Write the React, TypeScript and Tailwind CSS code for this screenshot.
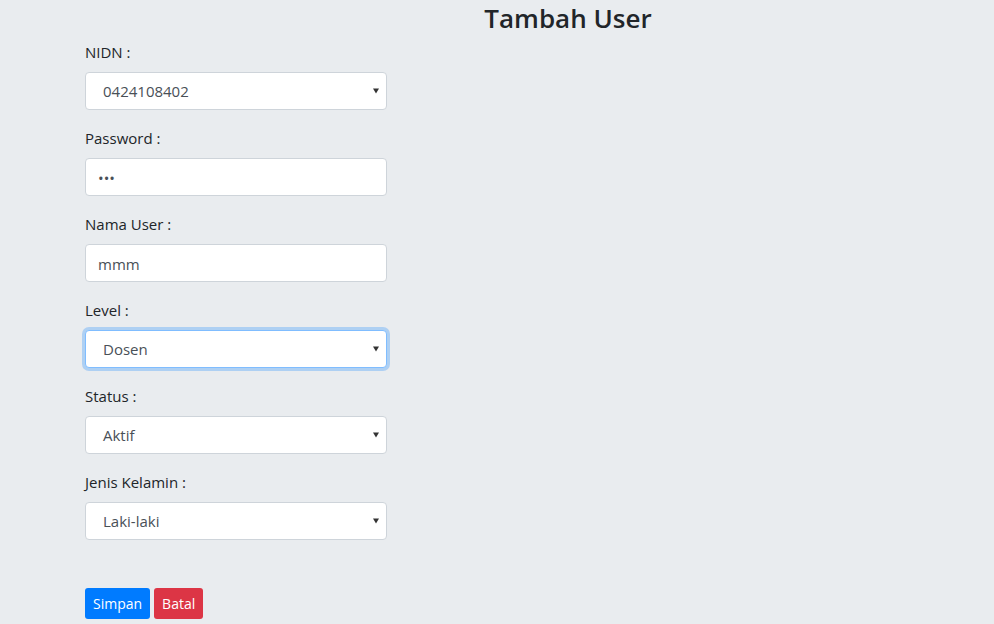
import React from 'react';

const font = { fontFamily: '"Open Sans", "Liberation Sans", sans-serif' };

function Caret() {
  return (
    <svg width="8" height="6" viewBox="0 0 8 6" className="shrink-0">
      <path d="M1 0.5h6L4 5.5z" fill="#333" />
    </svg>
  );
}

function Select({ value, focus }: { value: string; focus?: boolean }) {
  return (
    <div
      className={`h-[38px] w-full bg-white rounded-[4px] border flex items-center justify-between pl-[17px] pr-[6px] text-[15px] text-[#495057] ${
        focus ? 'border-[#80bdff] shadow-[0_0_0_3px_rgba(0,123,255,0.25)]' : 'border-[#ced4da]'
      }`}
    >
      <span className="pt-[1px]">{value}</span>
      <Caret />
    </div>
  );
}

function Field({ label, children }: { label: string; children: React.ReactNode }) {
  return (
    <div className="mb-4">
      <label className="block mb-2 text-[15px] leading-6 text-[#212529]">{label}</label>
      {children}
    </div>
  );
}

export default function App() {
  return (
    <div className="min-h-screen bg-[#e9ecef] text-[#212529]" style={font}>
      <h3 className="text-[26px] leading-[36px] font-semibold text-center pl-[142px] mb-[4px]">Tambah User</h3>
      <div className="pl-[85px]">
        <div className="w-[302px]">
          <Field label="NIDN :">
            <Select value="0424108402" />
          </Field>
          <Field label="Password :">
            <input
              type="password"
              readOnly
              value="123"
              className="h-[38px] w-full bg-white rounded-[4px] border border-[#ced4da] px-3 pt-[1px] text-[15px] text-[#495057] outline-none"
            />
          </Field>
          <Field label="Nama User :">
            <input
              type="text"
              readOnly
              value="mmm"
              className="h-[38px] w-full bg-white rounded-[4px] border border-[#ced4da] px-3 pt-[1px] text-[15px] text-[#495057] outline-none"
            />
          </Field>
          <Field label="Level :">
            <Select value="Dosen" focus />
          </Field>
          <Field label="Status :">
            <Select value="Aktif" />
          </Field>
          <Field label="Jenis Kelamin :">
            <Select value="Laki-laki" />
          </Field>
          <div className="mt-[48px] flex gap-1">
            <button className="h-[31px] px-2 rounded-[3px] bg-[#007bff] text-white text-[14px]">Simpan</button>
            <button className="h-[31px] px-2 rounded-[3px] bg-[#dc3545] text-white text-[14px]">Batal</button>
          </div>
        </div>
      </div>
    </div>
  );
}
